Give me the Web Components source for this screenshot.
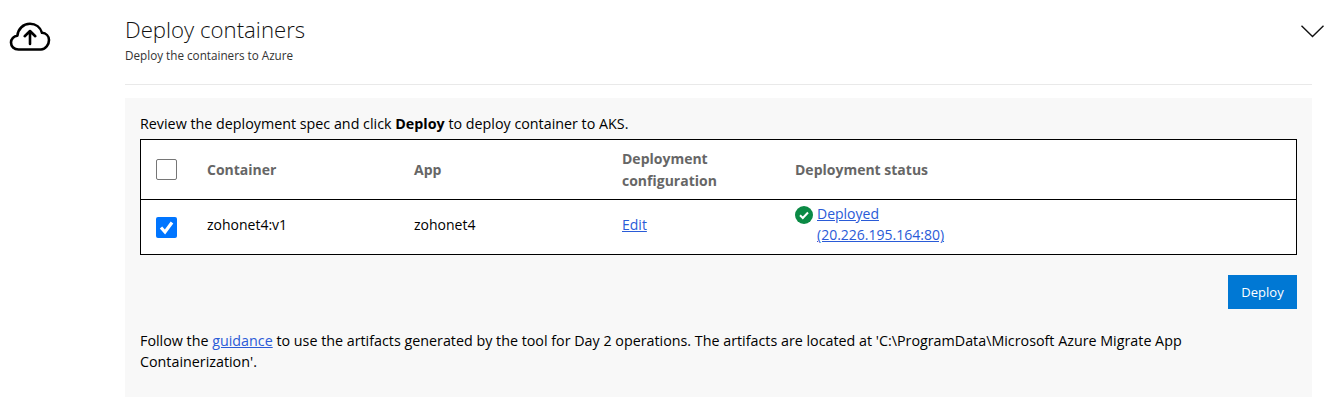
<!DOCTYPE html>
<html>
<head>
<meta charset="utf-8">
<title>Deploy containers</title>
<style>
  html, body { margin: 0; background: #fff; }
  body { font-family: "Open Sans", "Noto Sans", sans-serif; font-size: 14px; color: #000; }
  a { color: #2a5bd7; }
</style>
</head>
<body>
<deploy-step heading="Deploy containers" subheading="Deploy the containers to Azure">
  <deploy-panel>
    <span slot="intro">Review the deployment spec and click <b>Deploy</b> to deploy container to AKS.</span>
    <container-table slot="table"></container-table>
    <span slot="footer">Follow the <a href="#">guidance</a> to use the artifacts generated by the tool for Day 2 operations. The artifacts are located at 'C:\ProgramData\Microsoft Azure Migrate App<br>Containerization'.</span>
  </deploy-panel>
</deploy-step>

<script>
class DeployStep extends HTMLElement {
  constructor() {
    super();
    this.attachShadow({ mode: 'open' });
  }

  connectedCallback() {
    this.shadowRoot.innerHTML = `
      <style>
        :host { display: grid; grid-template-columns: 125px 1187px 29px; height: 409px; box-sizing: border-box; }
        .icon { padding: 16px 0 0 9px; }
        .icon svg { display: block; }
        .head { height: 85px; box-sizing: border-box; padding-top: 14px; border-bottom: 1px solid #e9e9e9; margin-bottom: 13px; }
        h2 { margin: 0; font-size: 22.2px; font-weight: 300; line-height: 32px; color: #111; }
        p { margin: 1px 0 0; font-size: 11.7px; line-height: 16px; color: #333; }
        .toggle { margin-left: -11px; padding-top: 25px; }
        .toggle svg { display: block; }
      </style>
      <div class="icon">
        <svg width="42" height="36" viewBox="0 0 42 36" fill="none" stroke="#000" stroke-width="2.6" stroke-linecap="round" stroke-linejoin="round">
          <path d="M11 33.5H9.5C5 33.5 2 30.4 2 26.6c0-3.7 2.9-6.6 6.4-6.9C9 12.9 14.2 7.8 21 7.8c5.7 0 10.4 3.6 12 9 4 .3 7 3.3 7 7.2 0 4.2-3.2 9.5-8 9.5H11z"/>
          <path d="M21 28V15M15.7 20.2 21 15l5.3 5.2"/>
        </svg>
      </div>
      <div>
        <div class="head">
          <h2>${this.getAttribute('heading')}</h2>
          <p>${this.getAttribute('subheading')}</p>
        </div>
        <slot></slot>
      </div>
      <div class="toggle">
        <svg width="23" height="13" viewBox="0 0 23 13" fill="none" stroke="#111" stroke-width="1.4">
          <path d="M.5.8 11.5 11.5 22.5.8"/>
        </svg>
      </div>
    `;
  }
}

class DeployPanel extends HTMLElement {
  constructor() {
    super();
    this.attachShadow({ mode: 'open' });
    this.shadowRoot.innerHTML = `
      <style>
        :host { display: block; background: #f8f8f8; height: 299px; box-sizing: border-box; padding: 16px 15px 0; }
        .intro { font-size: 14.3px; line-height: 20px; margin-bottom: 5px; }
        .actions { display: flex; justify-content: flex-end; margin-top: 20px; }
        button { width: 69px; height: 34px; border: 0; padding: 0; background: #0078d4; color: #fff; font: inherit; font-size: 13px; }
        .footer { font-size: 14.3px; margin-top: 21px; line-height: 21px; }
        ::slotted(span) { display: block; }
      </style>
      <div class="intro"><slot name="intro"></slot></div>
      <slot name="table"></slot>
      <div class="actions"><button>Deploy</button></div>
      <div class="footer"><slot name="footer"></slot></div>
    `;
  }
}

class CheckBox extends HTMLElement {
  constructor() {
    super();
    this.attachShadow({ mode: 'open' });
  }

  connectedCallback() {
    let tick = this.hasAttribute('checked')
      ? '<svg width="21" height="21" viewBox="0 0 21 21" fill="none" stroke="#fff" stroke-width="3.2"><path d="M5 10.5 9 15 16 5.5"/></svg>'
      : '';
    this.shadowRoot.innerHTML = `
      <style>
        :host { display: block; width: 21px; height: 21px; box-sizing: border-box; border-radius: 2px; border: 1px solid #767676; background: #fff; }
        :host([checked]) { border: 0; background: #0075ff; }
        svg { display: block; }
      </style>
      ${tick}
    `;
  }
}

class ContainerTable extends HTMLElement {
  constructor() {
    super();
    this.attachShadow({ mode: 'open' });
    this.shadowRoot.innerHTML = `
      <style>
        :host { display: block; background: #fff; border: 1px solid #000; }
        .row { display: grid; grid-template-columns: 66px 207px 208px 173px 1fr; align-items: center; }
        .row > * { min-width: 0; }
        .head { height: 59px; border-bottom: 1px solid #000; font-weight: 700; color: #666; line-height: 22px; }
        .body { height: 54px; }
        .body .cell { margin-top: -5px; }
        .box { padding-left: 15px; }
        a { color: #2a5bd7; }
        .status { display: flex; gap: 4px; line-height: 21px; margin-top: -6px; }
        .status svg { flex: none; margin-top: 3px; }
      </style>
      <div class="row head">
        <div class="box"><check-box></check-box></div>
        <div>Container</div>
        <div>App</div>
        <div>Deployment<br>configuration</div>
        <div>Deployment status</div>
      </div>
      <div class="row body">
        <div class="box"><check-box checked></check-box></div>
        <div class="cell">zohonet4:v1</div>
        <div class="cell">zohonet4</div>
        <div class="cell"><a href="#">Edit</a></div>
        <div class="status">
          <svg width="18" height="18" viewBox="0 0 18 18"><circle cx="9" cy="9" r="9" fill="#0b8a45"/><path d="M5 9.3 7.8 12 13 6.5" fill="none" stroke="#fff" stroke-width="2"/></svg>
          <div><a href="#">Deployed<br>(20.226.195.164:80)</a></div>
        </div>
      </div>
    `;
  }
}

customElements.define('check-box', CheckBox);
customElements.define('container-table', ContainerTable);
customElements.define('deploy-panel', DeployPanel);
customElements.define('deploy-step', DeployStep);
</script>
</body>
</html>
